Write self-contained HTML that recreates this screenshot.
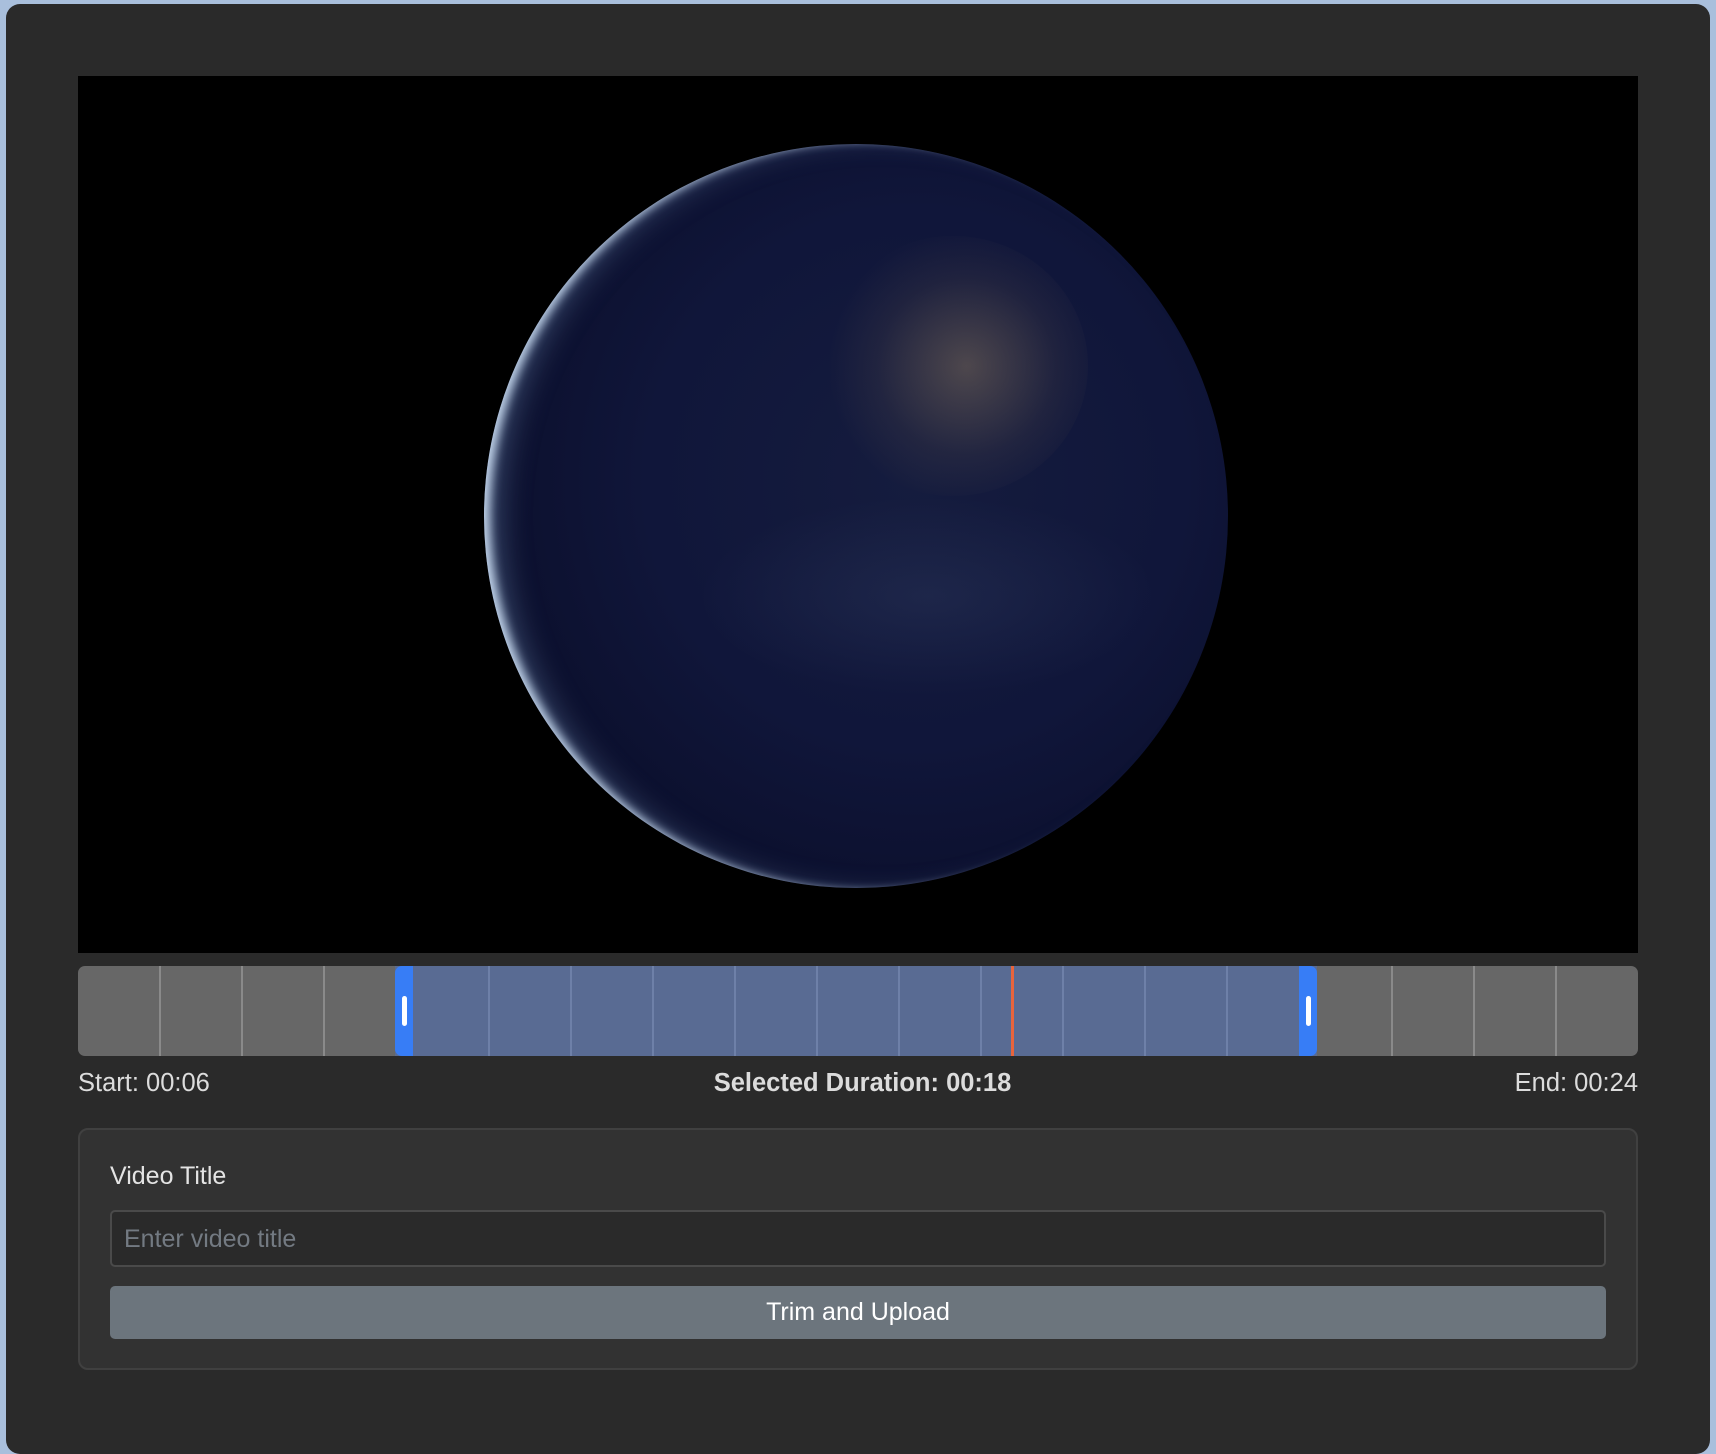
<!DOCTYPE html>
<html><head><meta charset="utf-8"><style>
*{box-sizing:border-box;margin:0;padding:0}
body{width:1716px;height:1440px;background:#a9bfdc;font-family:"Liberation Sans",Arial,sans-serif;position:relative;overflow:hidden}
.panel{position:absolute;left:6px;top:4px;width:1704px;height:1450px;background:#2a2a2a;border-radius:14px}
.video{position:absolute;left:78px;top:76px;width:1560px;height:877px;background:#000;overflow:hidden}
.earth{position:absolute;left:406px;top:68px;width:744px;height:744px;border-radius:50%;
background:radial-gradient(circle at 58% 45%,#151c3e 0%,#10163a 45%,#0b0f2c 75%,#080b22 100%);
box-shadow:inset 10px 0 10px -4px rgba(210,228,250,.9), inset 26px 0 30px -10px rgba(110,140,180,.45)}
.shadow{position:absolute;left:470px;top:80px;width:690px;height:730px;border-radius:50%;background:radial-gradient(ellipse at 55% 50%,rgba(0,0,0,0) 80%,rgba(4,6,16,.5) 100%)}
.lights{position:absolute;left:740px;top:160px;width:270px;height:260px;border-radius:50%;background:radial-gradient(circle at 55% 50%,rgba(230,190,120,.28),rgba(200,160,100,.08) 45%,rgba(0,0,0,0) 70%)}
.clouds{position:absolute;left:620px;top:420px;width:460px;height:200px;border-radius:50%;background:radial-gradient(ellipse at 50% 50%,rgba(90,110,150,.15),rgba(0,0,0,0) 70%)}
.tl{position:absolute;left:78px;top:966px;width:1560px;height:90px;background:#676767;border-radius:7px;overflow:hidden}
.seg{position:absolute;top:0;height:90px;width:2px;background:#8a8a8a}
.sel{position:absolute;left:317px;top:0;width:922px;height:90px;background:#596b93}
.sel .seg{background:#6e80a8}
.h{position:absolute;top:0;width:18px;height:90px;background:#377df6}
.h i{position:absolute;left:6.5px;top:30px;width:5px;height:30px;background:#fff;border-radius:3px}
.ph{position:absolute;left:933px;top:0;width:3px;height:90px;background:#e8643c}
.lbl{position:absolute;top:1069px;font-size:25.5px;color:#dcdcdc}
.card{position:absolute;left:78px;top:1128px;width:1560px;height:242px;background:#323232;border:2px solid #404040;border-radius:10px}
.card .t{position:absolute;left:30px;top:32px;font-size:25px;color:#e4e4e4}
.inp{position:absolute;left:30px;top:80px;width:1496px;height:57px;background:#2a2a2a;border:2px solid #4a4a4a;border-radius:5px;font-size:25px;color:#737a82;padding:13px 12px}
.btn{position:absolute;left:30px;top:156px;width:1496px;height:53px;background:#6c757d;border-radius:5px;color:#fff;font-size:25px;text-align:center;line-height:53px}
</style></head><body>
<div class="panel"></div>
<div class="video"><div class="earth"></div><div class="shadow"></div><div class="clouds"></div><div class="lights"></div></div>
<div class="tl">
<div class="seg" style="left:81px"></div><div class="seg" style="left:163px"></div><div class="seg" style="left:245px"></div>
<div class="sel">
<div class="seg" style="left:93px"></div><div class="seg" style="left:175px"></div><div class="seg" style="left:257px"></div><div class="seg" style="left:339px"></div><div class="seg" style="left:421px"></div><div class="seg" style="left:503px"></div><div class="seg" style="left:585px"></div><div class="seg" style="left:667px"></div><div class="seg" style="left:749px"></div><div class="seg" style="left:831px"></div>
</div>
<div class="seg" style="left:1313px"></div><div class="seg" style="left:1395px"></div><div class="seg" style="left:1477px"></div>
<div class="h" style="left:317px;border-radius:7px 0 0 7px"><i></i></div>
<div class="h" style="left:1221px;border-radius:0 7px 7px 0"><i></i></div>
<div class="ph"></div>
</div>
<div class="lbl" style="left:78px">Start: 00:06</div>
<div class="lbl" style="left:0;width:1716px;text-align:center;font-weight:bold;padding-left:9px">Selected Duration: 00:18</div>
<div class="lbl" style="right:78px">End: 00:24</div>
<div class="card">
<div class="t">Video Title</div>
<div class="inp">Enter video title</div>
<div class="btn">Trim and Upload</div>
</div>
</body></html>
